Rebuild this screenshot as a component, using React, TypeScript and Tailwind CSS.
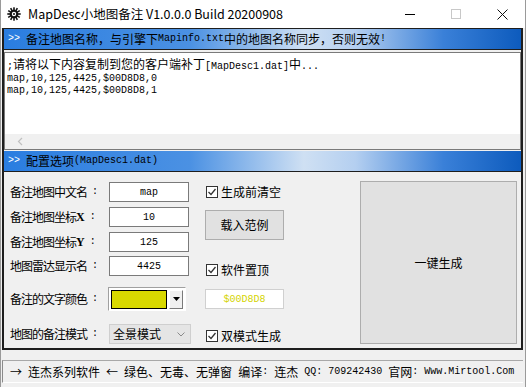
import type { ReactNode } from 'react'

// CJK runs use a 12px square cell, latin runs a 6px mono cell — like the old SimSun dialogs.
function Mix({ text, cjk = 'text-[12px]', latin = 'text-[10px]' }: { text: string; cjk?: string; latin?: string }) {
  const parts = text.split(/([^\x00-\x7f]+)/)
  return (
    <>
      {parts.map((p, i) =>
        p === '' ? null : /[^\x00-\x7f]/.test(p) ? (
          <span key={i} className={`font-['Noto_Sans_CJK_SC',sans-serif] ${cjk}`}>
            {p}
          </span>
        ) : (
          <span key={i} className={`whitespace-pre font-['Liberation_Mono',monospace] ${latin}`}>
            {p}
          </span>
        ),
      )}
    </>
  )
}

function Bar({ children }: { children: ReactNode }) {
  return (
    <div className="flex h-[21px] items-center border-b border-[#1e1e1e] bg-[linear-gradient(to_right,#2a7de0_0%,#4b91e3_36%,#cfe0f3_58%,#b4cff0_68%,#3a80d8_85%,#0d5bbd_100%)] pl-[4px] leading-none text-black">
      <span className="whitespace-pre font-['Liberation_Mono',monospace] text-[10px] text-white">{'>> '}</span>
      {children}
    </div>
  )
}

function Label({ children }: { children: ReactNode }) {
  return (
    <span className="flex w-[99px] items-center font-['Noto_Sans_CJK_SC',sans-serif] text-[12px] leading-none tracking-[-1px] text-black">
      {children}
      <span className="ml-[5px] font-['Liberation_Mono',monospace] text-[10px] tracking-normal">:</span>
    </span>
  )
}

function Field({ label, value }: { label: ReactNode; value: string }) {
  return (
    <div className="flex h-[20px] items-center">
      <Label>{label}</Label>
      <div className="flex h-[20px] w-[80px] items-center justify-center border border-[#7a7a7a] bg-white font-['Liberation_Mono',monospace] text-[10px] text-black">
        {value}
      </div>
    </div>
  )
}

function Check({ label }: { label: string }) {
  return (
    <div className="flex items-center gap-[3px] pl-[1px]">
      <span className="flex h-[12px] w-[12px] items-center justify-center border border-[#333] bg-white">
        <svg width="10" height="10" viewBox="0 0 10 10">
          <path d="M1.5 5 L4 7.5 L8.5 2" fill="none" stroke="#333" strokeWidth="1.3" />
        </svg>
      </span>
      <span className="font-['Noto_Sans_CJK_SC',sans-serif] text-[12px] leading-none text-black">{label}</span>
    </div>
  )
}

export default function App() {
  return (
    <div className="flex h-[387px] w-[526px] flex-col overflow-hidden border-x border-[#9a9a9a] bg-[#f0f0f0]">
      {/* 标题栏 */}
      <div className="flex h-[28px] items-center bg-white">
        <svg className="ml-[6px] mr-[7px]" width="14" height="14" viewBox="0 0 14 14">
          <g fill="#111">
            <circle cx="7" cy="7" r="4.3" />
            {[0, 30, 60, 90, 120, 150, 180, 210, 240, 270, 300, 330].map((a) => (
              <rect key={a} x="6.2" y="0.3" width="1.6" height="3" transform={`rotate(${a} 7 7)`} />
            ))}
          </g>
          <circle cx="7" cy="7" r="2.2" fill="#fff" />
          <circle cx="7" cy="7" r="1" fill="#111" />
        </svg>
        <span className="font-['Noto_Sans_CJK_SC',sans-serif] text-[12.5px] text-black">
          MapDesc小地图备注 V1.0.0.0 Build 20200908
        </span>
        <div className="ml-auto flex h-full items-center">
          <div className="flex h-full w-[46px] items-center justify-center">
            <span className="h-px w-[10px] bg-black" />
          </div>
          <div className="flex h-full w-[46px] items-center justify-center">
            <span className="h-[10px] w-[10px] border border-[#c8c8c8]" />
          </div>
          <div className="flex h-full w-[46px] items-center justify-center">
            <svg width="11" height="11" viewBox="0 0 11 11">
              <path d="M0.5 0.5 L10.5 10.5 M10.5 0.5 L0.5 10.5" stroke="#111" strokeWidth="1" />
            </svg>
          </div>
        </div>
      </div>

      {/* 主框 */}
      <div className="ml-px flex w-[521px] flex-col border-x-2 border-b-2 border-t border-[#1e1e1e]">
        <Bar>
          <Mix text="备注地图名称，与引擎下Mapinfo.txt中的地图名称同步，否则无效!" />
        </Bar>

        <div className="mt-[2px] flex h-[98px] flex-col border border-[#7a7a7a] bg-white">
          <div className="flex flex-1 flex-col pl-[2px] pt-[4px] leading-[12px] text-black">
            <div className="h-[12px]">
              <Mix text=";请将以下内容复制到您的客户端补丁[MapDesc1.dat]中..." />
            </div>
            <div className="h-[12px]">
              <Mix text="map,10,125,4425,$00D8D8,0" />
            </div>
            <div className="h-[12px]">
              <Mix text="map,10,125,4425,$00D8D8,1" />
            </div>
          </div>
          <div className="flex h-[15px] items-center bg-[#f0f0f0] pl-[12px]">
            <svg width="6" height="9" viewBox="0 0 6 9">
              <path d="M5 1 L1.5 4.5 L5 8" fill="none" stroke="#c0c0c0" strokeWidth="1.2" />
            </svg>
          </div>
        </div>

        <div className="mt-px">
          <Bar>
            <Mix text="配置选项(MapDesc1.dat)" />
          </Bar>
        </div>

        {/* 配置表单 */}
        <div className="flex h-[176px] pl-[6px]">
          <div className="flex flex-col pt-[10px]">
            <Field label="备注地图中文名" value="map" />
            <div className="mt-[5px]">
              <Field
                label={
                  <>
                    备注地图坐标<span className="font-['Liberation_Serif',serif] text-[12px] font-bold tracking-normal">X</span>
                  </>
                }
                value="10"
              />
            </div>
            <div className="mt-[5px]">
              <Field
                label={
                  <>
                    备注地图坐标<span className="font-['Liberation_Serif',serif] text-[12px] font-bold tracking-normal">Y</span>
                  </>
                }
                value="125"
              />
            </div>
            <div className="mt-[4px]">
              <Field label="地图雷达显示名" value="4425" />
            </div>

            <div className="mt-[11px] flex h-[24px] items-center">
              <Label>备注的文字颜色</Label>
              <div className="-ml-px flex h-[24px] w-[78px] items-center gap-[2px] border border-b-white border-l-[#a0a0a0] border-r-white border-t-[#a0a0a0] bg-white px-[2px]">
                <span className="h-[19px] w-[58px] border border-black bg-[#d8d800]" />
                <span className="flex h-[19px] w-[14px] items-center justify-center border border-b-[#7a7a7a] border-l-white border-r-[#7a7a7a] border-t-white bg-[#f0f0f0]">
                  <svg width="7" height="4" viewBox="0 0 7 4">
                    <path d="M0 0 L7 0 L3.5 4 Z" fill="#000" />
                  </svg>
                </span>
              </div>
            </div>

            <div className="mt-[13px] flex h-[20px] items-center">
              <Label>地图的备注模式</Label>
              <div className="flex h-[20px] w-[82px] items-center border border-[#cfcfcf] bg-[#e5e5e5] pl-[3px] pr-[5px]">
                <span className="font-['Noto_Sans_CJK_SC',sans-serif] text-[12px] leading-none text-black">全景模式</span>
                <svg className="ml-auto" width="8" height="5" viewBox="0 0 8 5">
                  <path d="M0.5 0.5 L4 4 L7.5 0.5" fill="none" stroke="#8a8a8a" strokeWidth="1" />
                </svg>
              </div>
            </div>
          </div>

          <div className="ml-[14px] flex w-[79px] flex-col">
            <div className="mt-[14px]">
              <Check label="生成前清空" />
            </div>
            <button
              type="button"
              className="mt-[12px] flex h-[30px] w-[79px] items-center justify-center border border-[#adadad] bg-[#e1e1e1] font-['Noto_Sans_CJK_SC',sans-serif] text-[12px] text-black"
            >
              载入范例
            </button>
            <div className="mt-[24px]">
              <Check label="软件置顶" />
            </div>
            <div className="mt-[13px] flex h-[20px] w-[79px] items-center justify-center border border-[#d0d0d0] bg-white font-['Liberation_Mono',monospace] text-[10px] text-[#d4d400]">
              $00D8D8
            </div>
            <div className="mt-[21px]">
              <Check label="双模式生成" />
            </div>
          </div>

          <button
            type="button"
            className="ml-auto mr-[4px] mt-[9px] flex h-[163px] w-[157px] items-center justify-center border border-[#adadad] bg-[#e1e1e1] font-['Noto_Sans_CJK_SC',sans-serif] text-[12px] text-black"
          >
            一键生成
          </button>
        </div>
      </div>

      {/* 底部信息 */}
      <div className="ml-px mt-[10px] flex h-[23px] w-[521px] items-center border-b border-l border-t border-b-white border-l-[#8a8a8a] border-t-[#a8a8a8] pl-[7px] leading-none text-black">
        <Mix text="→ 连杰系列软件 ← 绿色、无毒、无弹窗 编译: 连杰 QQ: 709242430 官网: Www.Mirtool.Com" />
      </div>
    </div>
  )
}
